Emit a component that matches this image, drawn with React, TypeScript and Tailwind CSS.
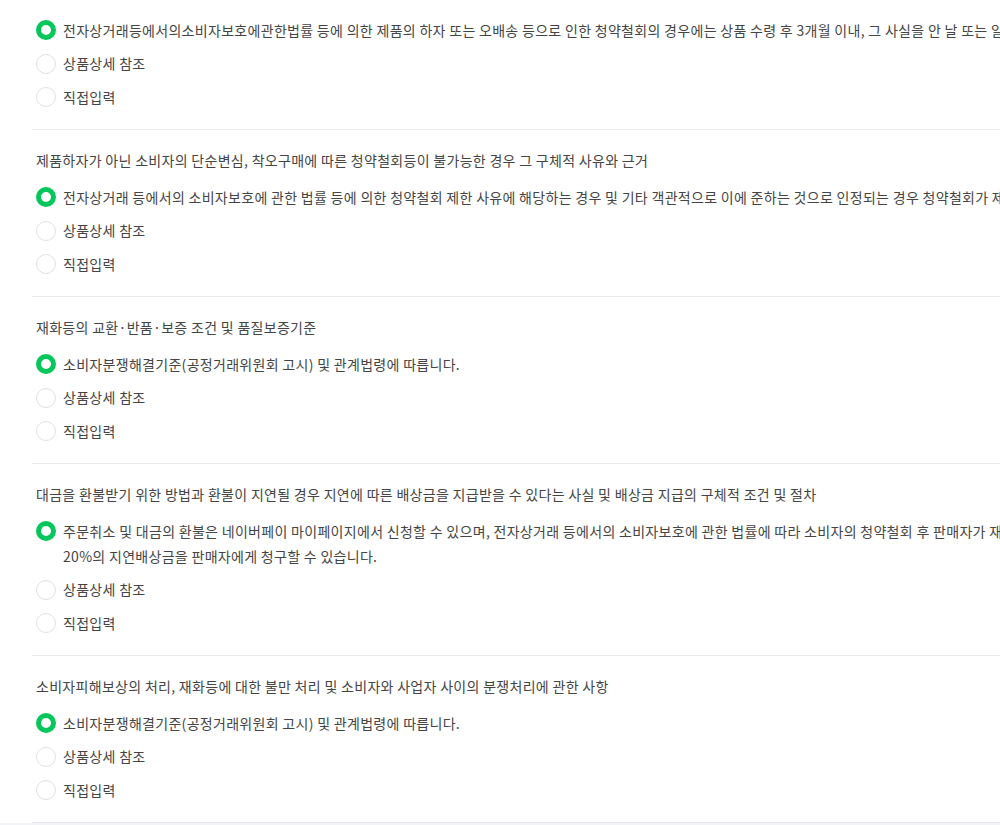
import React, { useState } from "react";

type Section = {
  title?: string;
  answer: string[];
};

const sections: Section[] = [
  {
    answer: [
      "전자상거래등에서의소비자보호에관한법률 등에 의한 제품의 하자 또는 오배송 등으로 인한 청약철회의 경우에는 상품 수령 후 3개월 이내, 그 사실을 안 날 또는 알 수 있었던 날부터 30일 이내에 청약철회를 할 수 있습니다.",
    ],
  },
  {
    title: "제품하자가 아닌 소비자의 단순변심, 착오구매에 따른 청약철회등이 불가능한 경우 그 구체적 사유와 근거",
    answer: [
      "전자상거래 등에서의 소비자보호에 관한 법률 등에 의한 청약철회 제한 사유에 해당하는 경우 및 기타 객관적으로 이에 준하는 것으로 인정되는 경우 청약철회가 제한될 수 있습니다.",
    ],
  },
  {
    title: "재화등의 교환·반품·보증 조건 및 품질보증기준",
    answer: ["소비자분쟁해결기준(공정거래위원회 고시) 및 관계법령에 따릅니다."],
  },
  {
    title: "대금을 환불받기 위한 방법과 환불이 지연될 경우 지연에 따른 배상금을 지급받을 수 있다는 사실 및 배상금 지급의 구체적 조건 및 절차",
    answer: [
      "주문취소 및 대금의 환불은 네이버페이 마이페이지에서 신청할 수 있으며, 전자상거래 등에서의 소비자보호에 관한 법률에 따라 소비자의 청약철회 후 판매자가 재화 등을 반환 받은 날로부터 3영업일 이내에 지급받아야할 대금의 환급을 정당한 사유없이 지연하는 때에는 소비자는 지연기간에 대해서 연",
      "20%의 지연배상금을 판매자에게 청구할 수 있습니다.",
    ],
  },
  {
    title: "소비자피해보상의 처리, 재화등에 대한 불만 처리 및 소비자와 사업자 사이의 분쟁처리에 관한 사항",
    answer: ["소비자분쟁해결기준(공정거래위원회 고시) 및 관계법령에 따릅니다."],
  },
];

function Radio({ checked }: { checked: boolean }) {
  return (
    <span
      className={
        checked
          ? "mt-[2.5px] block h-[20px] w-[20px] shrink-0 rounded-full border-[5px] border-[#03c75a] bg-white"
          : "mt-[2.5px] block h-[20px] w-[20px] shrink-0 rounded-full border border-[#e1e1e1] bg-white"
      }
    />
  );
}

function Row({
  checked,
  lines,
  onClick,
}: {
  checked: boolean;
  lines: string[];
  onClick: () => void;
}) {
  return (
    <div className="flex cursor-pointer items-start gap-[7px]" onClick={onClick}>
      <Radio checked={checked} />
      <div className="whitespace-nowrap">
        {lines.map((l) => (
          <div key={l}>{l}</div>
        ))}
      </div>
    </div>
  );
}

function Block({ section, first }: { section: Section; first: boolean }) {
  const [picked, setPicked] = useState(0);
  return (
    <div
      className={
        first
          ? "pl-[4px] pt-[17.5px] pb-[19.5px]"
          : "border-t border-[#ebebeb] pl-[4px] pt-[17.5px] pb-[19.5px]"
      }
    >
      {section.title && (
        <div className="mb-[12px] whitespace-nowrap">{section.title}</div>
      )}
      <div className="flex flex-col gap-[8.5px]">
        <Row checked={picked === 0} lines={section.answer} onClick={() => setPicked(0)} />
        <Row checked={picked === 1} lines={["상품상세 참조"]} onClick={() => setPicked(1)} />
        <Row checked={picked === 2} lines={["직접입력"]} onClick={() => setPicked(2)} />
      </div>
    </div>
  );
}

export default function App() {
  return (
    <div
      className="h-[825px] w-full overflow-hidden bg-white text-[14px] leading-[25px] tracking-[0.3px] text-[#454545]"
      style={{ fontFamily: '"Noto Sans CJK KR", "Noto Sans", sans-serif' }}
    >
      <div className="ml-[32px] border-b border-[#e2e5eb]">
        {sections.map((s, i) => (
          <Block key={i} section={s} first={i === 0} />
        ))}
      </div>
      <div className="h-[10px] bg-[#f1f3f6]" />
    </div>
  );
}
